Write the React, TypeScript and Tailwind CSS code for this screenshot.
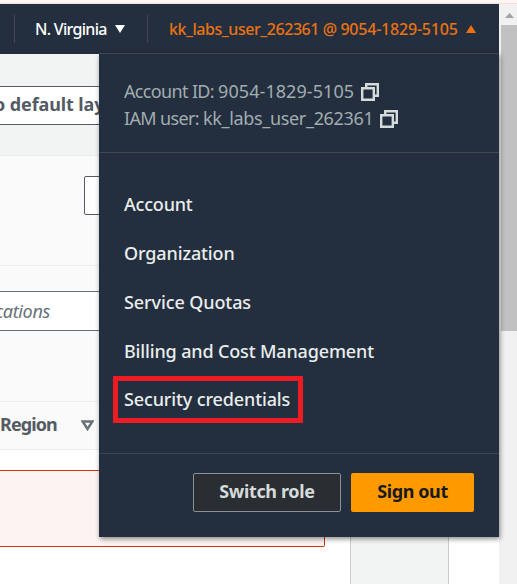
import React from "react";

function CopyIcon() {
  return (
    <svg width="18" height="18" viewBox="0 0 18 18" fill="none" stroke="#d5dbdb" strokeWidth="2.4" className="shrink-0">
      <path d="M1.200 5.200h11.600v11.600H1.200z" />
      <path d="M5.200 5V1.200h11.600v11.600h-4" />
    </svg>
  );
}

function Copyable({ label, value, width, valueSpacing }: { label: string; value: string; width: string; valueSpacing: string }) {
  return (
    <div className="flex h-[27px] items-center">
      <span className={`shrink-0 whitespace-pre text-[18px] text-[#a1adb0] ${width}`}>
        <span className="tracking-[-0.65px]">{label}</span>
        <span className={valueSpacing}>{value}</span>
      </span>
      <CopyIcon />
    </div>
  );
}

const links = [
  { label: "Account", spacing: "tracking-[-0.2px]" },
  { label: "Organization", spacing: "tracking-[-0.12px]" },
  { label: "Service Quotas", spacing: "tracking-[-0.1px]" },
  { label: "Billing and Cost Management", spacing: "tracking-[-0.15px]" },
  { label: "Security credentials", spacing: "tracking-[-0.13px]" },
];

function AccountMenu() {
  return (
    <div className="absolute left-[99px] top-[53px] flex h-[484px] w-[400px] flex-col border-t border-[#414750] bg-[#232f3e] shadow-[1px_2px_5px_rgba(0,0,0,0.45)]">
      <div className="h-[99px] border-b border-[#414750] pl-[25px] pt-[24px]">
        <Copyable label="Account ID: " value="9054-1829-5105" width="w-[237px]" valueSpacing="tracking-[0.07px]" />
        <Copyable label="IAM user: " value="kk_labs_user_262361" width="w-[256px]" valueSpacing="tracking-[-0.33px]" />
      </div>
      <div className="flex h-[301px] flex-col border-b border-[#3c4650] pt-[27px]">
        {links.map((l, i) => (
          <div key={l.label} className={`relative flex h-[49px] items-center pl-[25px] ${i === 4 ? "-mt-px" : ""}`}>
            <span className={`whitespace-nowrap text-[18px] font-medium text-[#eaeded] ${l.spacing}`}>{l.label}</span>
            {i === 4 && <span className="absolute left-[14px] top-px h-[47px] w-[190px] border-[5px] border-[#ed1c24]" />}
          </div>
        ))}
      </div>
      <div className="flex justify-end gap-[10px] pr-[25px] pt-[19px] text-[18px] font-bold leading-[35px]">
        <button className="h-[39px] w-[148px] rounded-[2px] border border-[#879196] bg-[#2a2e33] pb-[2px] tracking-[-0.35px] text-[#d5dbdb]">Switch role</button>
        <button className="h-[39px] w-[123px] rounded-[2px] bg-[#ff9900] pb-[2px] tracking-[-0.4px] text-[#16191f]">Sign out</button>
      </div>
    </div>
  );
}

function Content() {
  return (
    <div className="flex w-[499px] flex-1 flex-col overflow-hidden">
      <div className="flex h-[101px] flex-col bg-[#f2f3f3] pt-[32px]">
        <div className="flex h-[39px] items-center whitespace-nowrap border-y border-[#545b64] bg-white pb-[2px] text-[18px] font-bold text-[#545b64]">
          <span className="-ml-[6px] tracking-[-0.1px]">o default layout</span>
        </div>
      </div>
      <div className="flex flex-1">
        <div className="flex w-[350px] flex-col bg-white">
          <div className="h-[111px] border-b border-t border-[#eaeded] bg-[#fafafa] pl-[84px] pt-[20px]">
            <div className="h-[39px] w-[160px] rounded-[2px] border border-[#545b64] bg-white" />
          </div>
          <div className="h-[135px] bg-[#fafafa] pt-[25px]">
            <div className="flex h-[40px] items-center border-y border-[#687078] bg-white text-[18px] italic text-[#687078]">
              <span className="-ml-[5px] tracking-[-0.35px]">cations</span>
            </div>
          </div>
          <div className="flex h-[49px] items-center border-y border-[#eaeded] bg-[#fafafa] text-[18px] font-bold text-[#545b64]">
            <span className="w-[81px] pb-[2px] tracking-[-0.9px]">Region</span>
            <svg width="13" height="11" viewBox="0 0 13 11" fill="none" stroke="#687078" strokeWidth="2.4">
              <path d="M1.600 1.500h9.800L6.500 9z" />
            </svg>
          </div>
          <div className="mt-[20px] h-[77px] w-[325px] rounded-r-[2px] border-y border-r border-[#d13212] bg-[#fdf3f1]" />
        </div>
        <div className="w-[99px] border-x border-[#c6cccc] bg-[#f2f3f3]" />
        <div className="flex-1 bg-white" />
      </div>
    </div>
  );
}

export default function App() {
  return (
    <div className="relative flex h-[584px] w-[517px] flex-col overflow-hidden bg-white font-['Noto_Sans',sans-serif]">
      <div className="h-[4px] border-b border-[#f7dada] bg-[#fff5f3]" />
      <div className="flex flex-1">
        <div className="flex w-[499px] flex-col">
          <div className="flex h-[51px] items-center border-b border-[#414750] bg-[#232f3e] text-[16px] font-medium">
            <div className="ml-[14px] h-[28px] w-px bg-[#414750]" />
            <span className="ml-[20px] w-[80px] shrink-0 whitespace-nowrap tracking-[-0.7px] text-white">N. Virginia</span>
            <svg width="10" height="8" viewBox="0 0 10 8" fill="#fff"><path d="M0 0h10L5 8z" /></svg>
            <div className="ml-[22px] h-[28px] w-px bg-[#414750]" />
            <span className="ml-[21px] w-[297px] shrink-0 whitespace-nowrap text-[#ec7211]">
              <span className="tracking-[-0.45px]">kk_labs_user_262361 @ </span>
              <span className="tracking-[-0.2px]">9054-1829-5105</span>
            </span>
            <svg width="10" height="8" viewBox="0 0 10 8" fill="#ec7211"><path d="M0 8h10L5 0z" /></svg>
          </div>
          <div className="-mt-px flex flex-1">
            <Content />
          </div>
        </div>
        <div className="flex flex-1 flex-col bg-[#f1f1f1]">
          <svg width="18" height="21" viewBox="0 0 18 21" fill="#a3a3a3"><path d="M6 14h9L10.500 9z" /></svg>
          <div className="ml-[2px] h-[306px] bg-[#c1c1c1]" />
        </div>
      </div>
      <AccountMenu />
    </div>
  );
}
